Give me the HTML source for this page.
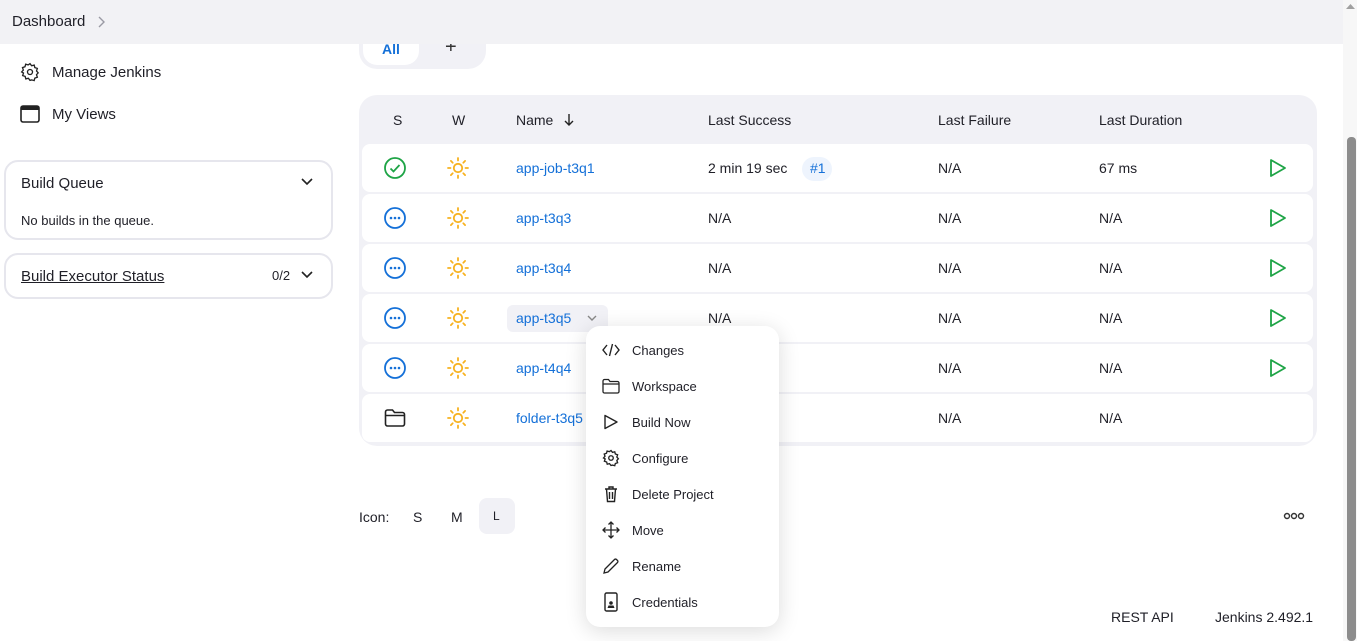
<!DOCTYPE html>
<html><head><meta charset="utf-8"><style>
*{box-sizing:border-box;margin:0;padding:0}
body{width:1357px;height:641px;overflow:hidden;background:#fff;font-family:"Liberation Sans",sans-serif;color:#1f1f27;font-size:14px;position:relative}
.a{position:absolute}
.hdr{left:0;top:0;width:1343px;height:44px;background:#f2f2f5;z-index:5}
.lnk{color:#1470d8}
.tbl{left:359px;top:95px;width:958px;height:351px;background:#f1f1f6;border-radius:18px}
.row{position:absolute;left:3px;width:951px;height:48px;background:#fff;border-radius:8px}
.th{position:absolute;top:112px;font-size:14px;font-weight:500}
.c{position:absolute;font-size:14px}
.card{border:2px solid #e6e6ed;border-radius:14px;background:#fff}
.menu{left:586px;top:326px;width:193px;height:301px;background:#fff;border-radius:14px;box-shadow:0 4px 22px rgba(0,0,0,.14)}
.mi{position:absolute;left:46px;font-size:13px}
.mic{position:absolute;left:16px}
</style></head><body>
<div class="a hdr"></div>
<div class="a" style="left:12px;top:13px;font-size:15px;z-index:6">Dashboard</div>
<svg class="a" style="left:96px;top:15px;z-index:6" width="10" height="14"><path d="M3 2l5 5-5 5" fill="none" stroke="#9a9aa4" stroke-width="1.4"/></svg>
<div class="a" style="left:1343px;top:0;width:14px;height:641px;background:#f7f7f7"></div>
<svg class="a" style="left:1346px;top:3px" width="9" height="6"><path d="M0 6L4.5 1 9 6z" fill="#a0a0a0"/></svg>
<div class="a" style="left:1347px;top:137px;width:9px;height:504px;background:#8c8c8c;border-radius:4px"></div>

<div class="a" style="left:359px;top:30px;width:127px;height:39px;background:#f1f1f6;border-radius:0 0 18px 18px"></div>
<div class="a" style="left:363px;top:30px;width:56px;height:35px;background:#fff;border-radius:0 0 14px 14px"></div>
<div class="a lnk" style="left:382px;top:41px;font-size:14px;font-weight:bold">All</div>
<div class="a" style="left:445px;top:36px;font-size:20px;color:#333">+</div>

<svg class="a" style="left:20px;top:62px" width="20" height="20" viewBox="0 0 24 24" fill="none" stroke="#222" stroke-width="1.6"><circle cx="12" cy="12" r="3"/><path d="M12 2l2 2.5 3-.8.8 3 3 1-1 3 2 2.3-2 2.3 1 3-3 1-.8 3-3-.8L12 22l-2-2.5-3 .8-.8-3-3-1 1-3L2 12l2-2.3-1-3 3-1 .8-3 3 .8z"/></svg>
<div class="a" style="left:52px;top:64px;font-size:15px">Manage Jenkins</div>
<svg class="a" style="left:20px;top:105px" width="20" height="18"><rect x="1" y="1" width="18" height="16" rx="2" fill="none" stroke="#222" stroke-width="1.6"/><rect x="1" y="1" width="18" height="4" fill="#222"/></svg>
<div class="a" style="left:52px;top:106px;font-size:15px">My Views</div>

<div class="a card" style="left:4px;top:160px;width:329px;height:80px"></div>
<div class="a" style="left:21px;top:175px;font-size:15px">Build Queue</div>
<svg class="a" style="left:300px;top:177px" width="14" height="10"><path d="M2 2l5 5 5-5" fill="none" stroke="#222" stroke-width="1.6"/></svg>
<div class="a" style="left:21px;top:213px;font-size:13px">No builds in the queue.</div>
<div class="a card" style="left:4px;top:253px;width:329px;height:46px"></div>
<div class="a" style="left:21px;top:268px;font-size:15px;text-decoration:underline">Build Executor Status</div>
<div class="a" style="left:272px;top:268px;font-size:13px">0/2</div>
<svg class="a" style="left:300px;top:270px" width="14" height="10"><path d="M2 2l5 5 5-5" fill="none" stroke="#222" stroke-width="1.6"/></svg>

<div class="a tbl">
<div class="row" style="top:49px"></div><div class="row" style="top:99px"></div><div class="row" style="top:149px"></div><div class="row" style="top:199px"></div><div class="row" style="top:249px"></div><div class="row" style="top:299px"></div>
</div>
<div class="th" style="left:393px">S</div>
<div class="th" style="left:452px">W</div>
<div class="th" style="left:516px">Name</div>
<svg class="a" style="left:563px;top:113px" width="12" height="14"><path d="M6 1v11M2 8l4 4 4-4" fill="none" stroke="#222" stroke-width="1.4"/></svg>
<div class="th" style="left:708px">Last Success</div>
<div class="th" style="left:938px">Last Failure</div>
<div class="th" style="left:1099px">Last Duration</div>

<svg width="0" height="0" style="position:absolute"><defs>
<g id="sun" fill="none" stroke="#f7b220" stroke-width="1.8" stroke-linecap="round"><circle cx="11" cy="11" r="4.2"/><path d="M11 1v2.5M11 18.5V21M1 11h2.5M18.5 11H21M3.9 3.9l1.8 1.8M16.3 16.3l1.8 1.8M3.9 18.1l1.8-1.8M16.3 5.7l1.8-1.8"/></g>
<g id="dots"><circle cx="11" cy="11" r="10" fill="none" stroke="#1470d8" stroke-width="1.8"/><circle cx="7" cy="11" r="1.3" fill="#1470d8"/><circle cx="11" cy="11" r="1.3" fill="#1470d8"/><circle cx="15" cy="11" r="1.3" fill="#1470d8"/></g>
<g id="play"><path d="M2 2L16 10 2 18z" fill="none" stroke="#1ea446" stroke-width="1.8" stroke-linejoin="round"/></g>
</defs></svg>

<svg class="a" style="left:384px;top:157px" width="22" height="22"><circle cx="11" cy="11" r="10" fill="none" stroke="#1ea446" stroke-width="1.8"/><path d="M6.5 11.5l3 3 6-6.5" fill="none" stroke="#1ea446" stroke-width="1.8"/></svg>
<svg class="a" style="left:384px;top:207px" width="22" height="22"><use href="#dots"/></svg>
<svg class="a" style="left:384px;top:257px" width="22" height="22"><use href="#dots"/></svg>
<svg class="a" style="left:384px;top:307px" width="22" height="22"><use href="#dots"/></svg>
<svg class="a" style="left:384px;top:357px" width="22" height="22"><use href="#dots"/></svg>
<svg class="a" style="left:384px;top:408px" width="22" height="20"><path d="M1.5 4a2 2 0 0 1 2-2h5l2 2.5h8a2 2 0 0 1 2 2V16a2 2 0 0 1-2 2h-15a2 2 0 0 1-2-2z M1.5 7.5h19" fill="none" stroke="#222" stroke-width="1.6"/></svg>

<svg class="a" style="left:447px;top:157px" width="22" height="22"><use href="#sun"/></svg>
<svg class="a" style="left:447px;top:207px" width="22" height="22"><use href="#sun"/></svg>
<svg class="a" style="left:447px;top:257px" width="22" height="22"><use href="#sun"/></svg>
<svg class="a" style="left:447px;top:307px" width="22" height="22"><use href="#sun"/></svg>
<svg class="a" style="left:447px;top:357px" width="22" height="22"><use href="#sun"/></svg>
<svg class="a" style="left:447px;top:407px" width="22" height="22"><use href="#sun"/></svg>

<div class="c lnk" style="left:516px;top:160px">app-job-t3q1</div>
<div class="c lnk" style="left:516px;top:210px">app-t3q3</div>
<div class="c lnk" style="left:516px;top:260px">app-t3q4</div>
<div class="a" style="left:507px;top:305px;width:101px;height:27px;background:#f1f1f6;border-radius:6px"></div>
<div class="c lnk" style="left:516px;top:310px">app-t3q5</div>
<svg class="a" style="left:586px;top:314px" width="12" height="8"><path d="M2 2l4 4 4-4" fill="none" stroke="#888" stroke-width="1.4"/></svg>
<div class="c lnk" style="left:516px;top:360px">app-t4q4</div>
<div class="c lnk" style="left:516px;top:410px">folder-t3q5</div>

<div class="c" style="left:708px;top:160px">2 min 19 sec</div>
<div class="a" style="left:802px;top:157px;width:30px;height:24px;background:#eef4fd;border-radius:12px"></div>
<div class="c lnk" style="left:810px;top:160px">#1</div>
<div class="c" style="left:708px;top:210px">N/A</div>
<div class="c" style="left:708px;top:260px">N/A</div>
<div class="c" style="left:708px;top:310px">N/A</div>

<div class="c" style="left:938px;top:160px">N/A</div><div class="c" style="left:938px;top:210px">N/A</div><div class="c" style="left:938px;top:260px">N/A</div><div class="c" style="left:938px;top:310px">N/A</div><div class="c" style="left:938px;top:360px">N/A</div><div class="c" style="left:938px;top:410px">N/A</div>
<div class="c" style="left:1099px;top:160px">67 ms</div><div class="c" style="left:1099px;top:210px">N/A</div><div class="c" style="left:1099px;top:260px">N/A</div><div class="c" style="left:1099px;top:310px">N/A</div><div class="c" style="left:1099px;top:360px">N/A</div><div class="c" style="left:1099px;top:410px">N/A</div>

<svg class="a" style="left:1269px;top:158px" width="18" height="20"><use href="#play"/></svg>
<svg class="a" style="left:1269px;top:208px" width="18" height="20"><use href="#play"/></svg>
<svg class="a" style="left:1269px;top:258px" width="18" height="20"><use href="#play"/></svg>
<svg class="a" style="left:1269px;top:308px" width="18" height="20"><use href="#play"/></svg>
<svg class="a" style="left:1269px;top:358px" width="18" height="20"><use href="#play"/></svg>

<div class="a" style="left:359px;top:509px;font-size:14px">Icon:</div>
<div class="a" style="left:413px;top:509px;font-size:14px">S</div>
<div class="a" style="left:451px;top:509px;font-size:14px">M</div>
<div class="a" style="left:479px;top:498px;width:36px;height:36px;background:#f1f1f6;border-radius:8px"></div>
<div class="a" style="left:493px;top:509px;font-size:12px">L</div>
<svg class="a" style="left:1283px;top:512px" width="22" height="8"><g fill="none" stroke="#333" stroke-width="1.4"><circle cx="4" cy="4" r="2.5"/><circle cx="11" cy="4" r="2.5"/><circle cx="18" cy="4" r="2.5"/></g></svg>
<div class="a" style="left:1111px;top:609px;font-size:14px">REST API</div>
<div class="a" style="left:1215px;top:609px;font-size:14px">Jenkins 2.492.1</div>

<div class="a menu">
<svg class="mic" style="top:17px" width="18" height="14"><path d="M5 2L1 7l4 5M13 2l4 5-4 5M10.5 1l-3 12" fill="none" stroke="#222" stroke-width="1.4"/></svg>
<div class="mi" style="top:17px">Changes</div>
<svg class="mic" style="top:52px" width="18" height="16"><path d="M1 3a1.5 1.5 0 0 1 1.5-1.5h4l1.5 2h7.5A1.5 1.5 0 0 1 17 5v8.5a1.5 1.5 0 0 1-1.5 1.5h-13A1.5 1.5 0 0 1 1 13.5zM1 6h16" fill="none" stroke="#222" stroke-width="1.3"/></svg>
<div class="mi" style="top:53px">Workspace</div>
<svg class="mic" style="top:88px" width="18" height="16"><path d="M3 1.5L15 8 3 14.5z" fill="none" stroke="#222" stroke-width="1.4" stroke-linejoin="round"/></svg>
<div class="mi" style="top:89px">Build Now</div>
<svg class="mic" style="top:123px" width="18" height="18" viewBox="0 0 24 24" fill="none" stroke="#222" stroke-width="1.8"><circle cx="12" cy="12" r="3"/><path d="M12 2l2 2.5 3-.8.8 3 3 1-1 3 2 2.3-2 2.3 1 3-3 1-.8 3-3-.8L12 22l-2-2.5-3 .8-.8-3-3-1 1-3L2 12l2-2.3-1-3 3-1 .8-3 3 .8z"/></svg>
<div class="mi" style="top:125px">Configure</div>
<svg class="mic" style="top:159px" width="18" height="18"><path d="M3 4h12M7 4V2h4v2M4.5 4l1 12.5h7l1-12.5M7.5 7v7M10.5 7v7" fill="none" stroke="#222" stroke-width="1.4"/></svg>
<div class="mi" style="top:161px">Delete Project</div>
<svg class="mic" style="top:195px" width="18" height="18"><path d="M9 1v16M1 9h16M6.5 3.5L9 1l2.5 2.5M6.5 14.5L9 17l2.5-2.5M3.5 6.5L1 9l2.5 2.5M14.5 6.5L17 9l-2.5 2.5" fill="none" stroke="#222" stroke-width="1.3"/></svg>
<div class="mi" style="top:197px">Move</div>
<svg class="mic" style="top:231px" width="18" height="18"><path d="M2 16l1-4L12.5 2.5a1.4 1.4 0 0 1 2 0l1 1a1.4 1.4 0 0 1 0 2L6 15z" fill="none" stroke="#222" stroke-width="1.3"/></svg>
<div class="mi" style="top:233px">Rename</div>
<svg class="mic" style="top:266px" width="18" height="20"><rect x="3" y="1" width="12" height="18" rx="1.5" fill="none" stroke="#222" stroke-width="1.4"/><circle cx="9" cy="11" r="1.8" fill="#222"/><path d="M5.5 16h7l-1-2.5h-5z" fill="#222"/></svg>
<div class="mi" style="top:269px">Credentials</div>
</div>
</body></html>
